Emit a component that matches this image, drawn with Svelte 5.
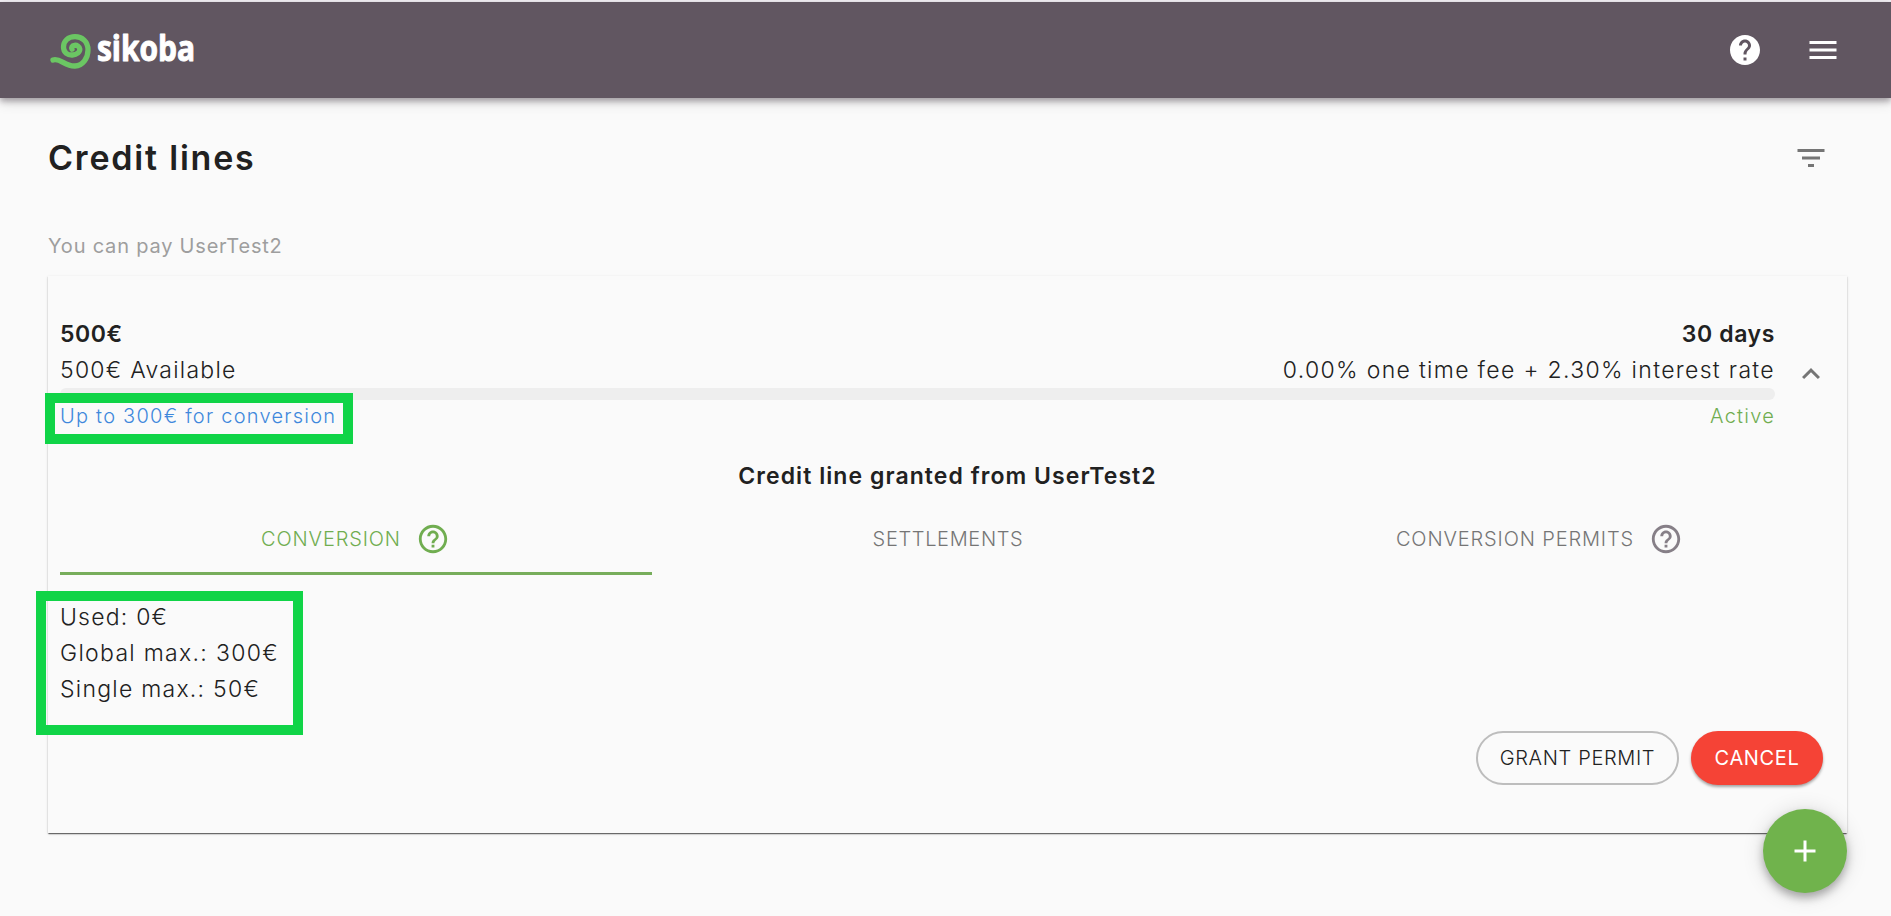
<script>
  const limits = [
    { text: 'Used: 0€', spacing: 1.2 },
    { text: 'Global max.: 300€', spacing: 1.3 },
    { text: 'Single max.: 50€', spacing: 1.25 },
  ];
</script>

{#snippet helpOutline()}
  <svg class="help" viewBox="0 0 24 24"><path d="M11 18h2v-2h-2v2zm1-16C6.48 2 2 6.48 2 12s4.48 10 10 10 10-4.48 10-10S17.52 2 12 2zm0 18c-4.41 0-8-3.59-8-8s3.59-8 8-8 8 3.59 8 8-3.59 8-8 8zm0-14c-2.21 0-4 1.79-4 4h2c0-1.1.9-2 2-2s2 .9 2 2c0 2-3 1.75-3 5h2c0-2.25 3-2.5 3-5 0-2.21-1.79-4-4-4z" /></svg>
{/snippet}

<div class="page">
  <header>
    <svg class="logo" viewBox="0 0 150 64" role="img" aria-label="sikoba">
      <path class="snail" d="M5 42C12 39.500 17 48.500 27 48C35 47.500 40 40 40 32C40 23.500 34 18.700 27 18.700C20 18.700 15.500 23 15.500 29C15.500 34.500 19.500 37.300 24.500 37C29 36.700 32 34 31.800 31C31.500 28.500 29 27 26.500 27.300C24 27.600 23 29.500 24 31.300" />
      <text x="49" y="43" textLength="98" lengthAdjust="spacingAndGlyphs">sikoba</text>
    </svg>
    <div class="actions">
      <svg class="icon" viewBox="0 0 24 24"><path d="M12 2C6.480 2 2 6.480 2 12s4.480 10 10 10 10-4.480 10-10S17.520 2 12 2zm1 17h-2v-2h2v2zm2.070-7.750l-.9.920C13.450 12.900 13 13.500 13 15h-2v-.5c0-1.100.450-2.100 1.170-2.830l1.240-1.260c.370-.360.590-.860.590-1.410 0-1.100-.9-2-2-2s-2 .9-2 2H8c0-2.210 1.790-4 4-4s4 1.790 4 4c0 .880-.360 1.680-.930 2.250z" /></svg>
      <svg class="icon" viewBox="0 0 24 24"><path d="M3 18h18v-2H3v2zm0-5h18v-2H3v2zm0-7v2h18V6H3z" /></svg>
    </div>
  </header>

  <div class="heading">
    <h1>Credit lines</h1>
    <svg class="icon" viewBox="0 0 24 24"><path d="M10 18h4v-2h-4v2zM3 6v2h18V6H3zm3 7h12v-2H6v2z" /></svg>
  </div>
  <p class="caption">You can pay UserTest2</p>

  <main class="card">
    <section class="summary">
      <div class="info">
        <div class="row strong"><span>500€</span><span>30 days</span></div>
        <div class="row"><span>500€ Available</span><span class="rate">0.00% one time fee + 2.30% interest rate</span></div>
        <div class="bar"></div>
        <div class="row status"><span class="convert">Up to 300€ for conversion</span><span class="active">Active</span></div>
        <div class="mark mark-top"></div>
      </div>
      <svg class="icon chevron" viewBox="0 0 24 24"><path d="M12 8l-6 6 1.410 1.410L12 10.830l4.590 4.580L18 14z" /></svg>
    </section>

    <h2>Credit line granted from UserTest2</h2>

    <nav>
      <div class="tab selected"><span>CONVERSION</span>{@render helpOutline()}</div>
      <div class="tab"><span class="plain">SETTLEMENTS</span></div>
      <div class="tab"><span>CONVERSION PERMITS</span>{@render helpOutline()}</div>
    </nav>

    <section class="limits">
      {#each limits as line}<div style="letter-spacing:{line.spacing}px">{line.text}</div>{/each}
      <div class="mark mark-limits"></div>
    </section>

    <div class="buttons">
      <button class="grant">GRANT PERMIT</button>
      <button class="cancel">CANCEL</button>
    </div>
  </main>

  <button class="fab" aria-label="Add"><svg class="icon" viewBox="0 0 24 24"><path d="M19 13h-6v6h-2v-6H5v-2h6V5h2v6h6v2z" /></svg></button>
</div>

<style>
  :global(body) { margin: 0; background: #fafafa; }
  .page { position: relative; box-sizing: border-box; height: 916px; padding-top: 2px; overflow: hidden; background: #fafafa; color: #212121; font-family: Inter, "Liberation Sans", sans-serif; font-weight: 300; }
  header { display: flex; align-items: center; justify-content: space-between; box-sizing: border-box; height: 96px; padding: 0 50px 0 48px; background: #615661; color: #fff; box-shadow: 0 3px 6px rgba(60, 48, 60, .4), 0 5px 12px rgba(0, 0, 0, .12), 0 -2px 0 #f4f1f6; }
  .logo { width: 150px; height: 64px; overflow: visible; }
  .logo text { font: 700 35px "Open Sans", sans-serif; fill: #fff; stroke: #fff; stroke-width: 1; stroke-linejoin: round; }
  .snail { fill: none; stroke: #6bc663; stroke-width: 5.300; stroke-linecap: round; stroke-linejoin: round; }
  .actions { display: flex; gap: 42px; }
  .icon { width: 36px; height: 36px; fill: currentColor; flex: none; display: block; }
  .heading { display: flex; align-items: center; justify-content: space-between; height: 120px; padding: 0 62px 0 48px; }
  .heading .icon { color: #757575; }
  h1 { margin: 0; font-size: 34px; line-height: 40px; font-weight: 600; letter-spacing: 1.8px; }
  .caption { margin: 12px 0 0 48px; height: 32px; line-height: 32px; font-size: 20px; font-weight: 400; letter-spacing: .8px; color: #9e9e9e; }
  .card { box-sizing: border-box; height: 557px; margin: 14px 44px 0 48px; padding: 40px 24px 0 12px; box-shadow: 0 2px 1px -1px rgba(0, 0, 0, .35), 0 1px 1px rgba(0, 0, 0, .3), 0 1px 3px rgba(0, 0, 0, .12); }
  .summary { display: flex; align-items: center; height: 118px; }
  .info { position: relative; flex: 1; }
  .row { display: flex; justify-content: space-between; height: 36px; line-height: 36px; font-size: 23px; letter-spacing: 1.25px; white-space: nowrap; }
  .rate { letter-spacing: 1.32px; }
  .strong { font-weight: 600; letter-spacing: .6px; }
  .bar { height: 12px; border-radius: 6px; background: #eee; }
  .status { height: 34px; line-height: 32px; font-size: 20px; letter-spacing: 1.24px; }
  .convert { color: #3f88dc; }
  .active { color: #70ad50; }
  .chevron { margin: -2px -6px 0 18px; color: #757575; }
  .mark { position: absolute; box-sizing: border-box; border: 10px solid #10d447; }
  .mark-top { left: -15px; top: 77px; width: 308px; height: 51px; }
  h2 { margin: 24px -12px 9px 0; height: 36px; line-height: 36px; font-size: 23px; font-weight: 600; letter-spacing: 1.06px; text-align: center; }
  nav { display: grid; grid-template-columns: repeat(3, 592px); height: 72px; }
  .tab { display: flex; align-items: center; justify-content: center; gap: 15px; box-sizing: border-box; padding-top: 3px; border-bottom: 3px solid transparent; font-size: 20px; letter-spacing: .86px; color: #757575; }
  .plain { letter-spacing: .65px; }
  .selected { color: #70ad50; border-color: #77ad5b; }
  .help { width: 34px; height: 34px; fill: #867f87; margin-right: 1px; }
  .selected .help { fill: #70ad50; }
  .limits { position: relative; margin-top: 24px; font-size: 23px; line-height: 36px; }
  .mark-limits { left: -24px; top: -8px; width: 267px; height: 144px; }
  .buttons { display: flex; justify-content: flex-end; gap: 12px; margin-top: 24px; }
  button { box-sizing: border-box; height: 54px; padding: 0; border: 0; border-radius: 27px; font: 400 20px Inter, sans-serif; letter-spacing: .65px; }
  .grant { width: 203px; border: 2px solid #bdbdbd; background: transparent; color: #212121; font-weight: 300; }
  .cancel { width: 132px; background: #f54336; color: #fff; box-shadow: 0 2px 3px rgba(0, 0, 0, .35); }
  .fab { position: absolute; left: 1763px; top: 809px; width: 84px; height: 84px; border-radius: 50%; background: #70b34c; color: #fff; display: grid; place-items: center; box-shadow: 0 5px 8px rgba(0, 0, 0, .28), 0 2px 22px rgba(0, 0, 0, .14); }
</style>
